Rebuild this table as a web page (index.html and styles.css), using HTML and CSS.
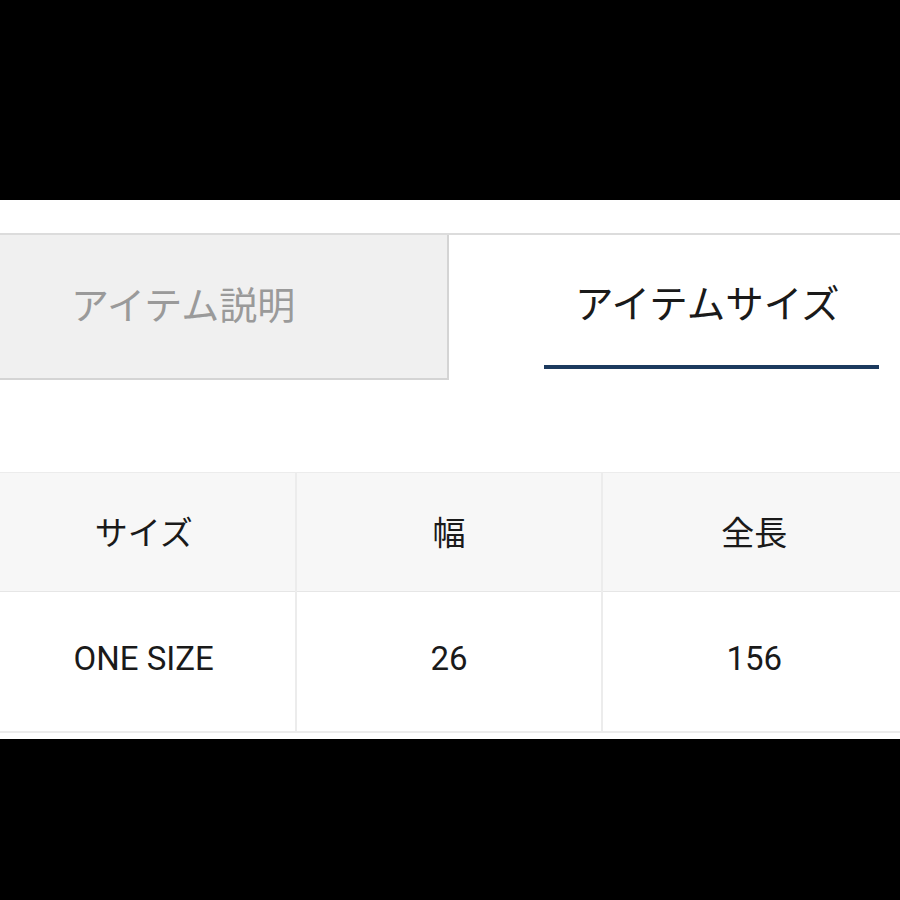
FILE: index.html
```html
<!DOCTYPE html>
<html lang="ja">
<head>
<meta charset="utf-8">
<link rel="stylesheet" href="styles.css">
</head>
<body>
<div class="panel">
  <div class="tabs">
    <div class="tab tab-inactive"><span>アイテム説明</span></div>
    <div class="tab tab-active">
      <span class="tab-label">アイテムサイズ</span>
      <div class="underline"></div>
    </div>
  </div>
  <table class="size-table">
    <tr class="head">
      <td>サイズ</td><td>幅</td><td>全長</td>
    </tr>
    <tr class="body-row">
      <td>ONE SIZE</td><td>26</td><td>156</td>
    </tr>
  </table>
</div>
</body>
</html>
```
FILE: styles.css
```css
html, body {
  margin: 0;
  padding: 0;
  background: #000;
  font-family: Roboto, "Noto Sans CJK JP", sans-serif;
}
.panel {
  margin-top: 200px;
  height: 539px;
  background: #fff;
  overflow: hidden;
}
.tabs {
  margin-top: 33px;
  border-top: 2px solid #dcdcdc;
  height: 145px;
  display: flex;
}
.tab {
  box-sizing: border-box;
  display: flex;
  flex-direction: column;
}
.tab-inactive {
  width: 449px;
  background: #f0f0f0;
  border-right: 2px solid #d4d4d4;
  border-bottom: 2px solid #d4d4d4;
  justify-content: center;
  align-items: flex-start;
  padding-left: 71px;
  padding-bottom: 8px;
  color: #9a9a9a;
  font-size: 38px;
}
.tab-active {
  flex: 1;
  color: #1a1a1a;
  font-size: 38.5px;
  align-items: flex-start;
}
.tab-label {
  margin-top: 45px;
  margin-left: 126px;
  line-height: 50px;
}
.underline {
  margin-top: 35px;
  margin-left: 95px;
  width: 335px;
  height: 4px;
  background: #1c3a5e;
}
.size-table {
  margin-top: 92px;
  margin-left: -10px;
  width: 918px;
  border-collapse: collapse;
  table-layout: fixed;
  border-top: 1px solid #ececec;
  border-bottom: 2px solid #ececec;
}
.size-table td {
  text-align: center;
  border-left: 2px solid #ececec;
  border-right: 2px solid #ececec;
  font-size: 33px;
  color: #1a1a1a;
}
.head td {
  height: 116px;
  background: #f7f7f7;
  border-bottom: 1px solid #e6e6e6;
  padding-top: 0;
  padding-bottom: 2px;
}
.body-row td {
  height: 133px;
  background: #fff;
  padding-top: 0;
  padding-bottom: 6px;
}
```
